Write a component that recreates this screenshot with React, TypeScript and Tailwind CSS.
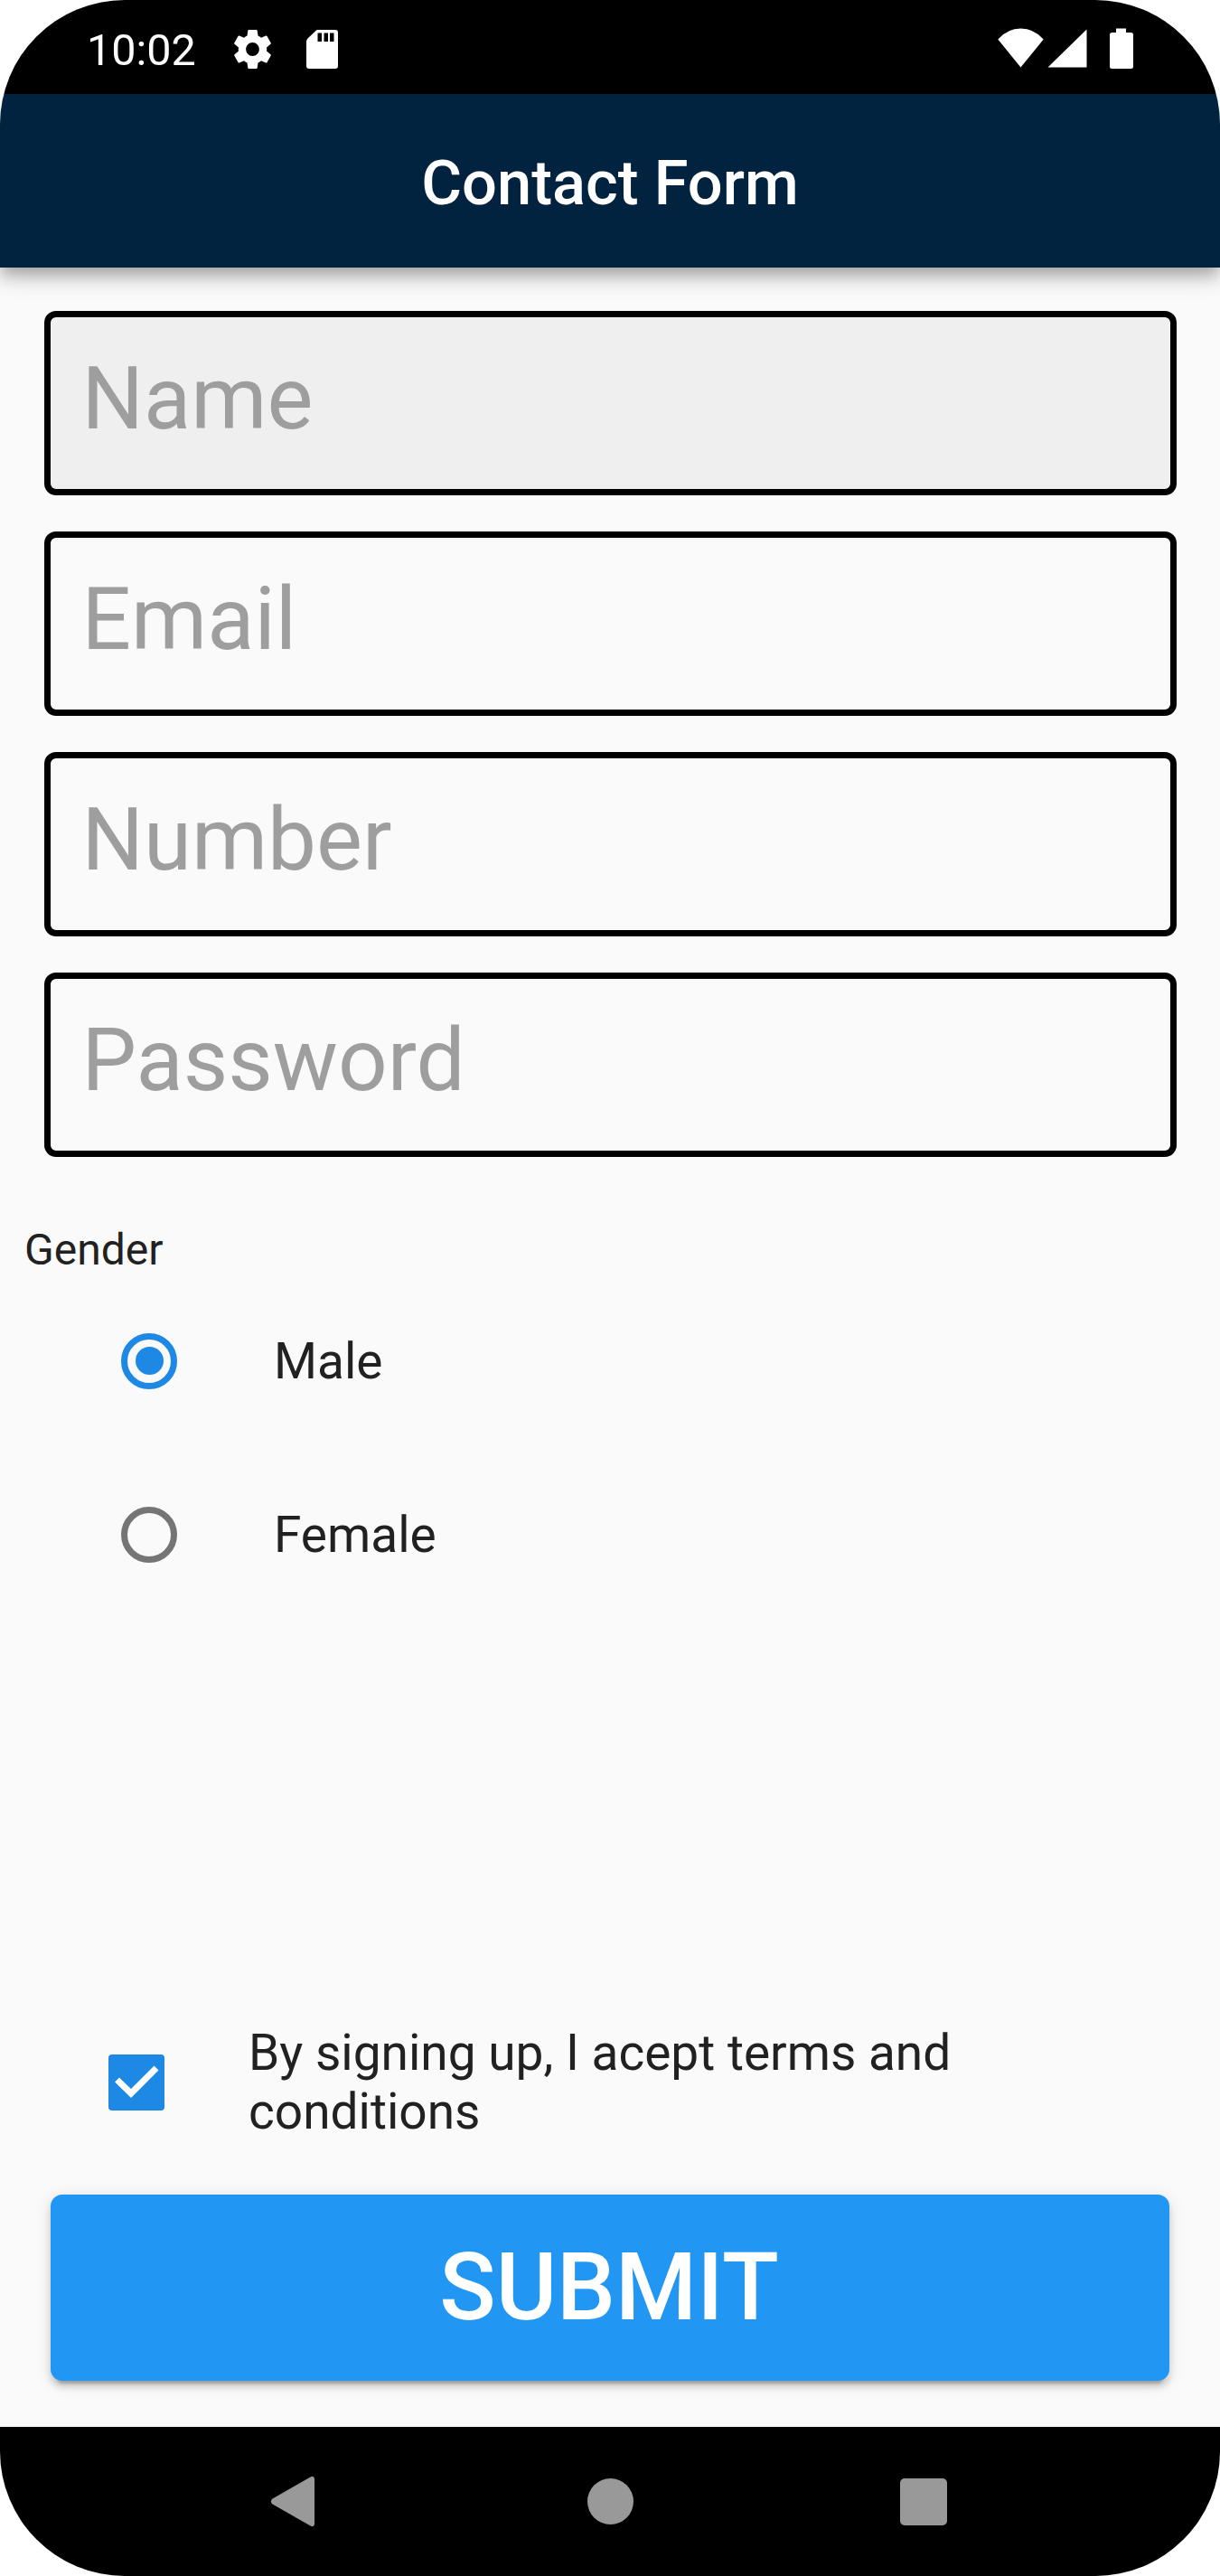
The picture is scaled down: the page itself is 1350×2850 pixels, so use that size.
import React, { useState } from "react";

function StatusBar() {
  return (
    <div className="flex h-[104px] shrink-0 items-start justify-between bg-black pr-24 pl-24 text-white">
      <div className="flex">
        <span className="mt-[27px] w-[163px] text-[48.500px] leading-[58px] whitespace-nowrap">10:02</span>
        <svg className="mt-[33px] h-[43px] w-[41px]" viewBox="2.2 2 19.6 20" preserveAspectRatio="none" fill="currentColor">
          <path d="M19.43 12.98c.04-.32.07-.64.07-.98s-.03-.66-.07-.98l2.11-1.65c.19-.15.24-.42.12-.64l-2-3.46c-.12-.22-.39-.3-.61-.22l-2.49 1c-.52-.4-1.08-.73-1.69-.98l-.38-2.65C14.46 2.18 14.25 2 14 2h-4c-.25 0-.46.18-.49.42l-.38 2.65c-.61.25-1.17.59-1.69.98l-2.49-1c-.23-.09-.49 0-.61.22l-2 3.46c-.13.22-.07.49.12.64l2.11 1.65c-.04.32-.07.65-.07.98s.03.66.07.98l-2.11 1.65c-.19.15-.24.42-.12.64l2 3.46c.12.22.39.3.61.22l2.49-1c.52.4 1.08.73 1.69.98l.38 2.65c.03.24.24.42.49.42h4c.25 0 .46-.18.49-.42l.38-2.65c.61-.25 1.17-.59 1.69-.98l2.49 1c.23.09.49 0 .61-.22l2-3.46c.12-.22.07-.49-.12-.64l-2.11-1.65zM12 15.5c-1.93 0-3.5-1.57-3.5-3.5s1.57-3.5 3.5-3.5 3.5 1.57 3.5 3.5-1.57 3.5-3.5 3.5z" />
        </svg>
        <svg className="mt-[33px] ml-[38.500px] h-[43px] w-[35px]" viewBox="0 0 35 43" fill="currentColor">
          <path fillRule="evenodd" d="M12 0H32Q35 0 35 3V40Q35 43 32 43H3Q0 43 0 40V13Q0 11 1.5 9.5L10 1.5Q11 0 12 0ZM12.500 3.500V13H17V3.500ZM19.500 3.500V13H24V3.500ZM26 3.500V13H30.500V3.500Z" />
        </svg>
      </div>
      <svg className="mt-[31px] h-[45px] w-[150px]" viewBox="0 0 150 45" fill="currentColor">
        <path d="M25.500 43.500L0.300 12.500Q11 .6 25.500.6T50.700 12.500Z" />
        <path d="M98.500 1.500V43.500H55.500Z" />
        <path d="M131 .5H142V5H147.500Q150 5 150 7.500V42.500Q150 45 147.500 45H126.500Q124 45 124 42.500V7.500Q124 5 126.500 5H131Z" />
      </svg>
    </div>
  );
}

function Field({ label, active = false }: { label: string; active?: boolean }) {
  return (
    <input
      aria-label={label}
      placeholder={label}
      className={`block h-[203.500px] w-full rounded-[13px] border-[7px] border-black pb-[10px] pl-[35px] text-[96px] outline-none placeholder:text-[#9e9e9e] ${active ? "bg-[#efefef]" : "bg-transparent"}`}
    />
  );
}

function RadioRow({ label, checked, onSelect }: { label: string; checked: boolean; onSelect: () => void }) {
  return (
    <button
      role="radio"
      aria-checked={checked}
      onClick={onSelect}
      className="flex h-[192.500px] w-full items-center pl-[134px] text-left text-[55px] text-[#212121]"
    >
      <span className={`flex size-[62px] items-center justify-center rounded-full border-[7px] ${checked ? "border-[#1e88e5]" : "border-[#757575]"}`}>
        {checked && <span className="size-[31px] rounded-full bg-[#1e88e5]" />}
      </span>
      <span className="ml-[107px]">{label}</span>
    </button>
  );
}

export default function App() {
  const [gender, setGender] = useState("Male");
  const [accepted, setAccepted] = useState(true);

  return (
    <div className="bg-white font-['Roboto',sans-serif]">
      <div className="flex h-[2850px] w-[1350px] flex-col overflow-hidden rounded-[138px] bg-[#fafafa]">
        <StatusBar />
        <header className="z-10 flex h-48 shrink-0 items-center justify-center bg-[#01233f] pt-[5px] shadow-[0_7px_14px_-3px_rgba(0,0,0,0.2),0_14px_17px_rgba(0,0,0,0.14),0_3px_34px_rgba(0,0,0,0.12)]">
          <h1 className="text-[68.600px] leading-[80px] font-medium text-white">Contact Form</h1>
        </header>
        <main className="flex flex-1 flex-col">
          <div className="flex flex-col gap-[40.500px] px-[48.500px] pt-[48px]">
            <Field label="Name" active />
            <Field label="Email" />
            <Field label="Number" />
            <Field label="Password" />
          </div>
          <h2 className="mt-[75px] ml-[27px] text-[48px] leading-[56px] text-[#212121]">Gender</h2>
          <div role="radiogroup" className="-mt-px">
            <RadioRow label="Male" checked={gender === "Male"} onSelect={() => setGender("Male")} />
            <RadioRow label="Female" checked={gender === "Female"} onSelect={() => setGender("Female")} />
          </div>
          <label className="mt-auto flex items-center pl-[120px] text-[#212121]">
            <input type="checkbox" className="sr-only" checked={accepted} onChange={() => setAccepted(!accepted)} />
            <span className="flex size-[62px] items-center justify-center rounded-[4px] bg-[#1e88e5]">
              {accepted && (
                <svg className="size-[62px]" viewBox="0 0 62 62" fill="none" stroke="white" strokeWidth="7">
                  <path d="M9.500 28L25 43L53 15" />
                </svg>
              )}
            </span>
            <span className="ml-[93px] w-[860px] text-[55px] leading-[65px]">By signing up, I acept terms and conditions</span>
          </label>
          <button className="mx-[56px] mt-[59px] mb-[51px] flex h-[206px] items-center justify-center rounded-[13px] bg-[#2196f3] pr-[2px] text-[103px] font-medium text-white shadow-[0_10px_3px_-7px_rgba(0,0,0,0.2),0_7px_7px_rgba(0,0,0,0.14),0_3px_17px_rgba(0,0,0,0.12)]">
            SUBMIT
          </button>
        </main>
        <nav className="flex h-[165px] shrink-0 items-center justify-between bg-black pr-[302px] pl-[299px] text-[#999999]">
          <svg className="h-[57px] w-[50px]" viewBox="0 0 50 57" fill="currentColor">
            <path d="M49 3.500V53.500Q48.500 57.500 44.500 55.500L2.500 31.500Q-.8 28.500 2.500 25.500L44.500 1.500Q48.500 -.5 49 3.500Z" />
          </svg>
          <span className="ml-[5px] size-[51px] rounded-full bg-[#999999]" />
          <span className="size-[52px] rounded-[5px] bg-[#999999]" />
        </nav>
      </div>
    </div>
  );
}
